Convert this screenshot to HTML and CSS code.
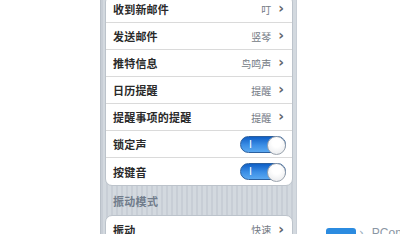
FILE: index.html
```html
<!DOCTYPE html>
<html>
<head>
<meta charset="utf-8">
<link rel="stylesheet" href="styles.css">
</head>
<body>
<div class="page">
  <div class="panel">
    <div class="group first">
      <div class="row"><span class="label">收到新邮件</span><span class="value">叮</span><span class="chev">›</span></div>
      <div class="row"><span class="label">发送邮件</span><span class="value">竖琴</span><span class="chev">›</span></div>
      <div class="row"><span class="label">推特信息</span><span class="value">鸟鸣声</span><span class="chev">›</span></div>
      <div class="row"><span class="label">日历提醒</span><span class="value">提醒</span><span class="chev">›</span></div>
      <div class="row"><span class="label">提醒事项的提醒</span><span class="value">提醒</span><span class="chev">›</span></div>
      <div class="row"><span class="label">锁定声</span><span class="toggle"><span class="on">I</span><span class="knob"></span></span></div>
      <div class="row"><span class="label">按键音</span><span class="toggle"><span class="on">I</span><span class="knob"></span></span></div>
    </div>
    <div class="section">振动模式</div>
    <div class="group">
      <div class="row"><span class="label">振动</span><span class="value">快速</span><span class="chev">›</span></div>
    </div>
  </div>
  <div class="mark">
    <span class="mark-box"></span><span class="mark-arrow">›</span><span class="mark-text">PConline</span>
  </div>
</div>
</body>
</html>
```
FILE: styles.css
```css
html, body {
  margin: 0;
  padding: 0;
  background: #ffffff;
}
body {
  width: 400px;
  height: 234px;
  overflow: hidden;
  font-family: "Noto Sans CJK SC", "Noto Sans", sans-serif;
}
.page {
  display: flex;
  align-items: flex-start;
  height: 234px;
  overflow: hidden;
}
.panel {
  flex-shrink: 0;
  margin-left: 100px;
  width: 197px;
  height: 260px;
  box-sizing: border-box;
  padding: 0 4px 0 4px;
  background-color: #cdd3da;
  background-image: repeating-linear-gradient(90deg, #c8ced6 0px, #c8ced6 2px, #d3d9df 2px, #d3d9df 5px);
  border-left: 1px solid #b9c0c8;
}
.group {
  background: #ffffff;
  border-radius: 7px;
  border: 1px solid #bcc3cb;
  overflow: hidden;
}
.group.first {
  margin-top: -5px;
}
.row {
  height: 26px;
  display: flex;
  align-items: center;
  padding: 0 8px 0 7px;
  border-bottom: 1px solid #dadada;
}
.row:last-child {
  border-bottom: none;
  height: 27px;
}
.label {
  flex: 1;
  font-size: 11px;
  font-weight: 700;
  color: #2a2a2a;
  letter-spacing: 0.2px;
}
.value {
  font-size: 10px;
  color: #737a84;
  margin-right: 7px;
}
.chev {
  font-family: "DejaVu Sans", sans-serif;
  font-size: 14px;
  font-weight: 700;
  color: #5f646b;
  line-height: 1;
  margin-top: -2px;
}
.toggle {
  position: relative;
  flex-shrink: 0;
  width: 46px;
  height: 17px;
  border-radius: 9px;
  background: linear-gradient(#0f5fc6, #3c8fe6 55%, #5aa8f0);
  border: 1px solid #2b5f9e;
  box-sizing: border-box;
  margin-right: -2px;
}
.on {
  position: absolute;
  left: 8px;
  top: 1px;
  font-family: "DejaVu Sans", sans-serif;
  font-size: 10px;
  color: #ffffff;
  line-height: 13px;
}
.knob {
  position: absolute;
  right: -1px;
  top: -1px;
  width: 17px;
  height: 17px;
  border-radius: 50%;
  background: radial-gradient(circle at 50% 35%, #ffffff 30%, #e4e6e9 100%);
  border: 1px solid #9aa3ad;
}
.section {
  height: 29px;
  display: flex;
  align-items: center;
  padding-left: 8px;
  font-size: 11px;
  font-weight: 700;
  color: #707c8b;
  letter-spacing: 0.3px;
}
.mark {
  flex-shrink: 0;
  margin-top: 228px;
  margin-left: 29px;
  display: flex;
  align-items: flex-start;
}
.mark-box {
  width: 30px;
  height: 10px;
  border-radius: 3px;
  background: #2b8be0;
}
.mark-arrow {
  font-family: "DejaVu Sans", sans-serif;
  font-size: 12px;
  color: #9ab;
  line-height: 10px;
  margin-left: 3px;
}
.mark-text {
  font-family: "Liberation Sans", sans-serif;
  font-size: 12px;
  color: #8a96a4;
  line-height: 10px;
  margin-left: 8px;
}
```
